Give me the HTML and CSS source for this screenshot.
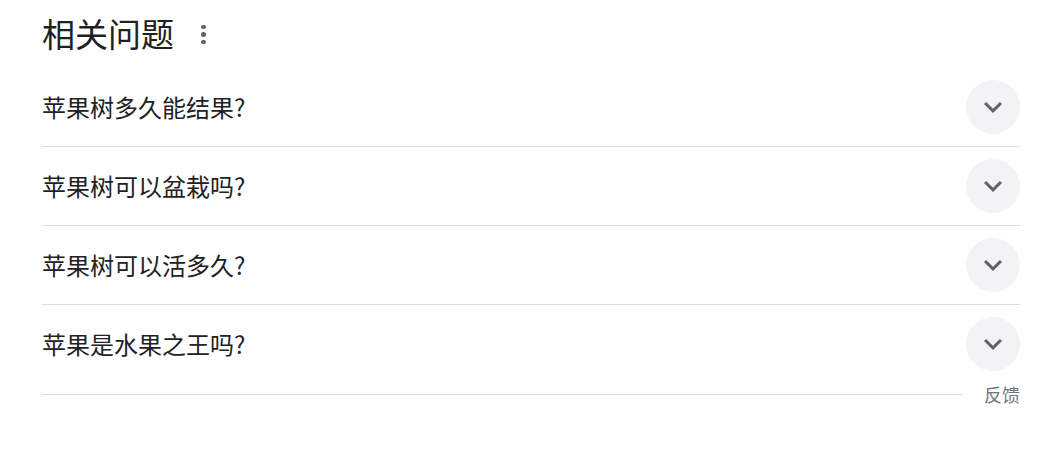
FILE: index.html
```html
<!DOCTYPE html>
<html lang="zh-CN">
<head>
<meta charset="utf-8">
<link rel="stylesheet" href="styles.css">
</head>
<body>
<div class="paa">
  <div class="header">
    <h2 class="title">相关问题</h2>
    <span class="menu" aria-label="更多选项"><i></i><i></i><i></i></span>
  </div>
  <div class="row">
    <span class="q">苹果树多久能结果?</span>
    <span class="btn"><svg viewBox="0 0 24 24" width="36" height="36"><path d="M16.59 8.59L12 13.17 7.41 8.59 6 10l6 6 6-6z"/></svg></span>
  </div>
  <div class="row">
    <span class="q">苹果树可以盆栽吗?</span>
    <span class="btn"><svg viewBox="0 0 24 24" width="36" height="36"><path d="M16.59 8.59L12 13.17 7.41 8.59 6 10l6 6 6-6z"/></svg></span>
  </div>
  <div class="row">
    <span class="q">苹果树可以活多久?</span>
    <span class="btn"><svg viewBox="0 0 24 24" width="36" height="36"><path d="M16.59 8.59L12 13.17 7.41 8.59 6 10l6 6 6-6z"/></svg></span>
  </div>
  <div class="row last">
    <span class="q">苹果是水果之王吗?</span>
    <span class="btn"><svg viewBox="0 0 24 24" width="36" height="36"><path d="M16.59 8.59L12 13.17 7.41 8.59 6 10l6 6 6-6z"/></svg></span>
  </div>
  <div class="feedback">
    <span class="line"></span>
    <span class="fb">反馈</span>
  </div>
</div>
</body>
</html>
```
FILE: styles.css
```css
html, body {
  margin: 0;
  padding: 0;
  background: #fff;
}
body {
  font-family: "Noto Sans CJK SC", "Noto Sans", sans-serif;
  color: #202124;
}
.paa {
  padding: 0 39px 0 42px;
}
.header {
  display: flex;
  align-items: center;
  height: 68px;
  box-sizing: border-box;
  padding-bottom: 2px;
}
.title {
  margin: 0;
  font-size: 33px;
  font-weight: 400;
  line-height: 38px;
}
.menu {
  display: flex;
  flex-direction: column;
  gap: 3px;
  margin-left: 27px;
  margin-top: 3px;
}
.menu i {
  display: block;
  width: 4.5px;
  height: 4.5px;
  border-radius: 50%;
  background: #5f6368;
}
.row {
  display: flex;
  align-items: center;
  justify-content: space-between;
  height: 78px;
  border-bottom: 1px solid #dadce0;
}
.row.last {
  border-bottom: none;
}
.q {
  font-size: 24px;
  line-height: 32px;
  color: #202124;
}
.btn {
  width: 54px;
  height: 54px;
  border-radius: 50%;
  background: #f1f3f4;
  display: flex;
  align-items: center;
  justify-content: center;
}
.btn svg {
  fill: #5f6368;
}
.feedback {
  display: flex;
  align-items: center;
  height: 22px;
}
.line {
  flex: 1;
  height: 1px;
  background: #dadce0;
  margin-right: 21px;
}
.fb {
  font-size: 18px;
  line-height: 22px;
  color: #70757a;
}
```
